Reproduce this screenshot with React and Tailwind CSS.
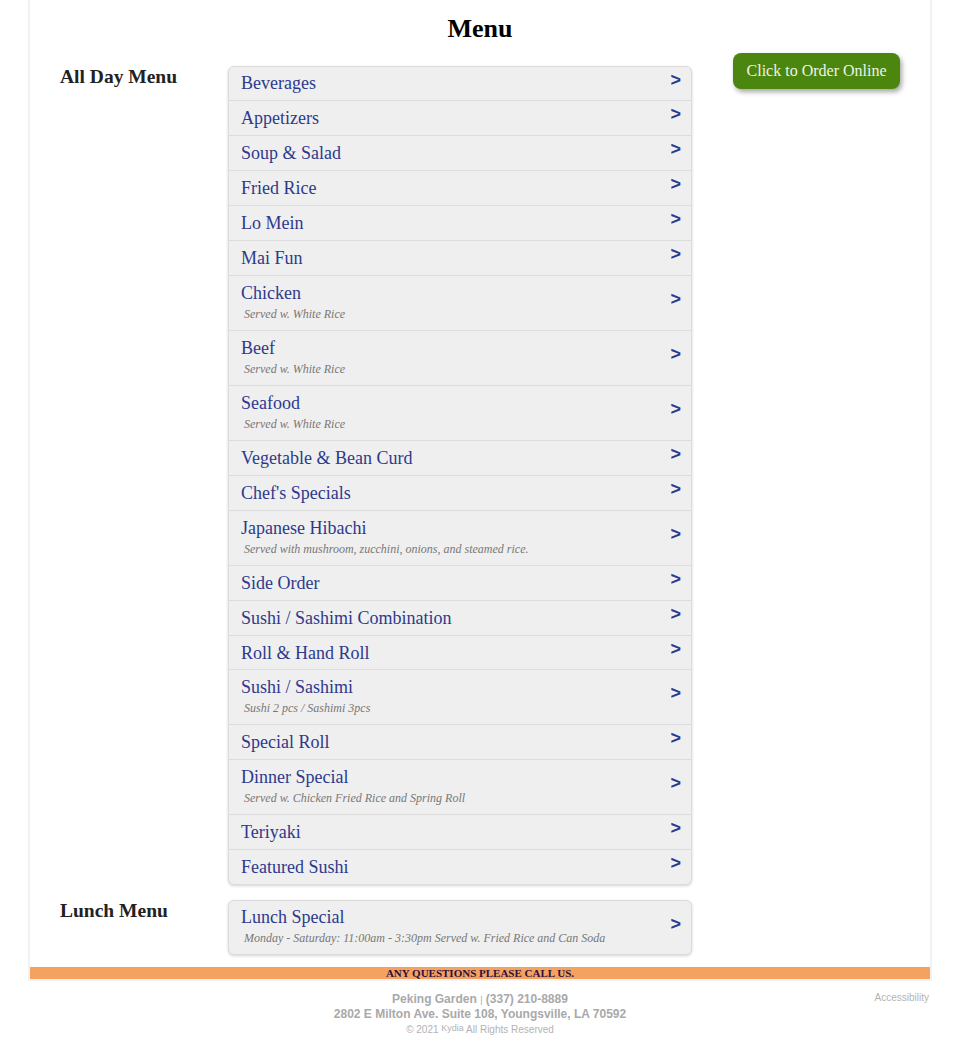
import React from "react";

const serif = { fontFamily: '"Liberation Serif", "Times New Roman", serif' };
const sans = { fontFamily: '"Liberation Sans", Arial, sans-serif' };

const allDay = [
  { name: "Beverages" },
  { name: "Appetizers" },
  { name: "Soup & Salad" },
  { name: "Fried Rice" },
  { name: "Lo Mein" },
  { name: "Mai Fun" },
  { name: "Chicken", sub: "Served w. White Rice" },
  { name: "Beef", sub: "Served w. White Rice" },
  { name: "Seafood", sub: "Served w. White Rice" },
  { name: "Vegetable & Bean Curd" },
  { name: "Chef's Specials" },
  { name: "Japanese Hibachi", sub: "Served with mushroom, zucchini, onions, and steamed rice." },
  { name: "Side Order" },
  { name: "Sushi / Sashimi Combination" },
  { name: "Roll & Hand Roll", tight: true },
  { name: "Sushi / Sashimi", sub: "Sushi 2 pcs / Sashimi 3pcs" },
  { name: "Special Roll" },
  { name: "Dinner Special", sub: "Served w. Chicken Fried Rice and Spring Roll" },
  { name: "Teriyaki" },
  { name: "Featured Sushi" },
];

const lunch = [
  { name: "Lunch Special", sub: "Monday - Saturday: 11:00am - 3:30pm Served w. Fried Rice and Can Soda" },
];

// one category row
function Row({ item, first }) {
  const pad = first ? "pt-[5px] pb-[6px]" : item.tight ? "pt-[6px] pb-[5px]" : "py-[6px]";
  return (
    <div
      className={`flex items-center pl-[12px] pr-[10px] ${first ? "" : "border-t border-[#dcdcdc]"}`}
    >
      <div className={`flex-1 ${pad}`}>
        <div className="text-[18px] leading-[22px] text-[#2d3a8c]">{item.name}</div>
        {item.sub && (
          <div className="my-[3px] pl-[3px] text-[12px] leading-[14px] italic text-[#777]">
            {item.sub}
          </div>
        )}
      </div>
      <span
        className="mb-[8px] text-[18px] font-bold leading-none text-[#2b3a8e]"
        style={sans}
      >
        &gt;
      </span>
    </div>
  );
}

function MenuBox({ items }) {
  return (
    <div className="w-[464px] rounded-[6px] border border-[#dcdcdc] bg-[#efefef] shadow-[0_1px_3px_rgba(0,0,0,0.18)]">
      {items.map((it, i) => (
        <Row key={it.name} item={it} first={i === 0} />
      ))}
    </div>
  );
}

export default function App() {
  return (
    <div className="min-h-screen bg-white" style={serif}>
      <div className="mx-[28px] border-x-2 border-b-2 border-[#f2f2f2]">
        <h1 className="pt-[14px] text-center text-[26px] font-bold leading-[30px] text-black">
          Menu
        </h1>

        {/* All day */}
        <div className="mt-[22px] flex items-start px-[30px]">
          <div className="w-[168px] text-[19.5px] font-bold leading-[22px] text-[#222]">
            All Day Menu
          </div>
          <MenuBox items={allDay} />
          <div className="-mt-[13px] flex flex-1 justify-end">
            <button className="h-[36px] rounded-[8px] bg-[#4b860f] px-[13.5px] text-[16px] text-[#eef4e6] shadow-[2px_3px_5px_rgba(0,0,0,0.35)]">
              Click to Order Online
            </button>
          </div>
        </div>

        {/* Lunch */}
        <div className="mt-[15px] flex items-start px-[30px]">
          <div className="w-[168px] pt-[-1px] text-[19.5px] font-bold leading-[22px] text-[#222]">
            Lunch Menu
          </div>
          <MenuBox items={lunch} />
        </div>

        <div className="mt-[12px] h-[12px] bg-[#f4a25f] text-center text-[11px] font-bold leading-[12px] text-[#2c1040]">
          ANY QUESTIONS PLEASE CALL US.
        </div>
      </div>

      <footer className="mx-[28px] flex pt-[11px] text-[#a9a9a9]" style={sans}>
        <div className="flex-1" />
        <div className="text-center">
          <div className="text-[12px] font-bold leading-[14px]">
            Peking Garden <span className="text-[9px] font-normal">|</span> (337) 210-8889
          </div>
          <div className="text-[12px] font-bold leading-[14px]">
            2802 E Milton Ave. Suite 108, Youngsville, LA 70592
          </div>
          <div className="mt-[2px] text-[10px] leading-[14px] text-[#b3b3b3]">
            © 2021 <span className="relative -top-[2px] text-[9px]">Kydia</span> All Rights Reserved
          </div>
        </div>
        <div className="flex flex-1 justify-end">
          <span className="pr-[3px] text-[10px] leading-[12px] text-[#b3b3b3]">Accessibility</span>
        </div>
      </footer>
    </div>
  );
}
